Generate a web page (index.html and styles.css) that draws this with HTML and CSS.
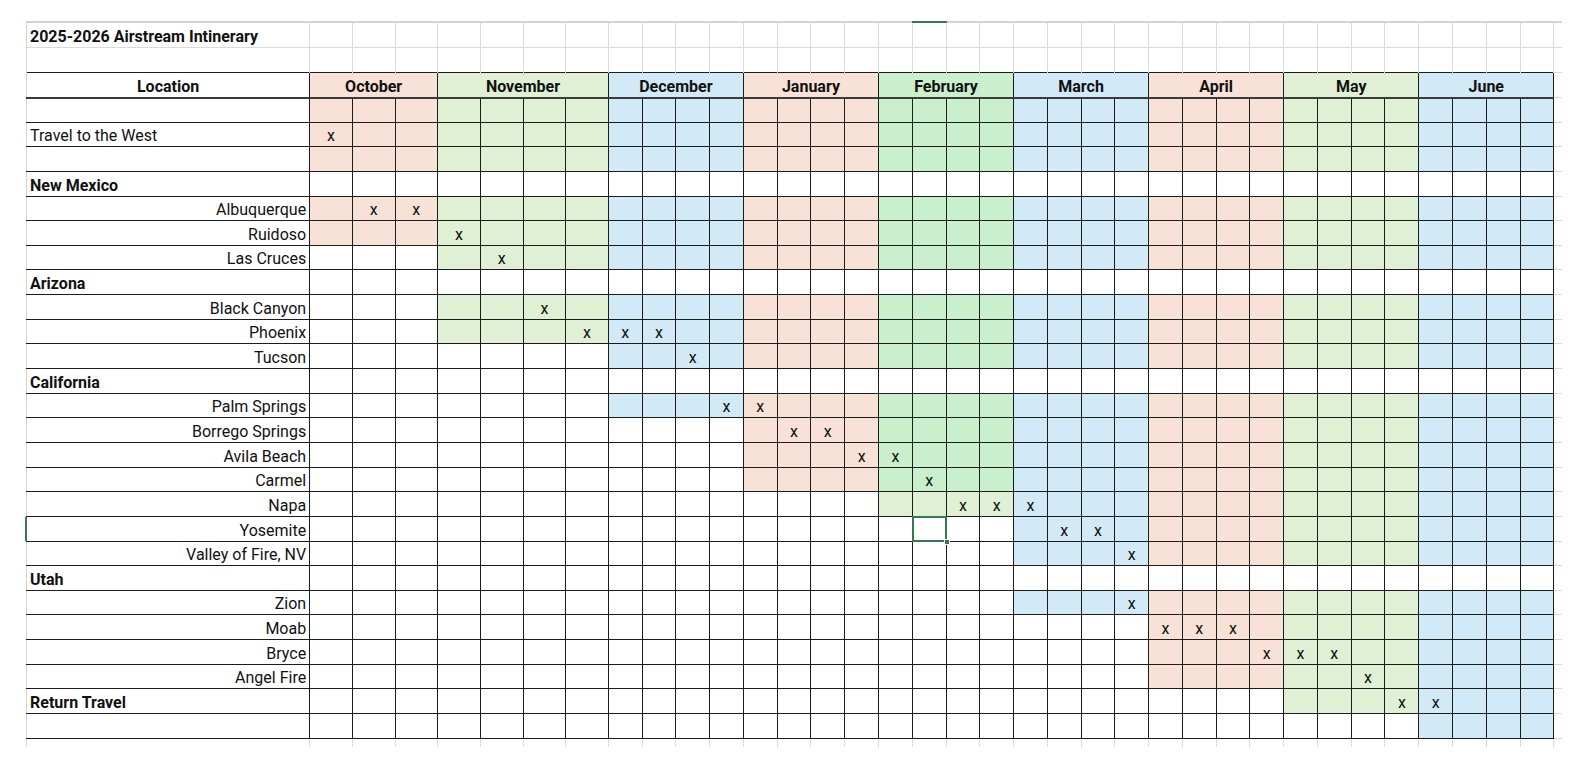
FILE: index.html
```html
<!DOCTYPE html>
<html lang="en">
<head>
<meta charset="utf-8">
<title>2025-2026 Airstream Intinerary</title>
<link rel="stylesheet" href="styles.css">
</head>
<body>
<div class="sheet">
<table class="itinerary">
<colgroup>
<col class="c-loc">
<col class="c-wide"><col class="c-wide"><col class="c-wide">
<col class="c-wide"><col class="c-wide"><col class="c-wide"><col class="c-wide">
<col class="c-narrow"><col class="c-narrow"><col class="c-narrow"><col class="c-narrow">
<col class="c-narrow"><col class="c-narrow"><col class="c-narrow"><col class="c-narrow">
<col class="c-narrow"><col class="c-narrow"><col class="c-narrow"><col class="c-narrow">
<col class="c-narrow"><col class="c-narrow"><col class="c-narrow"><col class="c-narrow">
<col class="c-narrow"><col class="c-narrow"><col class="c-narrow"><col class="c-narrow">
<col class="c-narrow"><col class="c-narrow"><col class="c-narrow"><col class="c-narrow">
<col class="c-narrow"><col class="c-narrow"><col class="c-narrow"><col class="c-narrow">
<col class="c-tail">
</colgroup>
<tr class="grid-row first"><td class="title">2025-2026 Airstream Intinerary</td><td></td><td></td><td></td> <td></td><td></td><td></td><td></td> <td></td><td></td><td></td><td></td> <td></td><td></td><td></td><td></td> <td></td><td class="col-active"></td><td></td><td></td> <td></td><td></td><td></td><td></td> <td></td><td></td><td></td><td></td> <td></td><td></td><td></td><td></td> <td></td><td></td><td></td><td></td><td class="tail"></td></tr>
<tr class="grid-row"><td></td><td></td><td></td><td></td> <td></td><td></td><td></td><td></td> <td></td><td></td><td></td><td></td> <td></td><td></td><td></td><td></td> <td></td><td></td><td></td><td></td> <td></td><td></td><td></td><td></td> <td></td><td></td><td></td><td></td> <td></td><td></td><td></td><td></td> <td></td><td></td><td></td><td></td><td class="tail"></td></tr>
<tr class="head-row"><th>Location</th><th colspan="3" class="m-peach">October</th><th colspan="4" class="m-green">November</th><th colspan="4" class="m-blue">December</th><th colspan="4" class="m-peach">January</th><th colspan="4" class="m-green-strong">February</th><th colspan="4" class="m-blue">March</th><th colspan="4" class="m-peach">April</th><th colspan="4" class="m-green">May</th><th colspan="4" class="m-blue">June</th><td class="tail"></td></tr>

<tr class="body-row from-oct"><td class="plain"></td><td></td><td></td><td></td> <td></td><td></td><td></td><td></td> <td></td><td></td><td></td><td></td> <td></td><td></td><td></td><td></td> <td></td><td></td><td></td><td></td> <td></td><td></td><td></td><td></td> <td></td><td></td><td></td><td></td> <td></td><td></td><td></td><td></td> <td></td><td></td><td></td><td></td><td class="tail"></td></tr>
<tr class="body-row from-oct"><td class="plain">Travel to the West</td><td>x</td><td></td><td></td> <td></td><td></td><td></td><td></td> <td></td><td></td><td></td><td></td> <td></td><td></td><td></td><td></td> <td></td><td></td><td></td><td></td> <td></td><td></td><td></td><td></td> <td></td><td></td><td></td><td></td> <td></td><td></td><td></td><td></td> <td></td><td></td><td></td><td></td><td class="tail"></td></tr>
<tr class="body-row from-oct"><td class="plain"></td><td></td><td></td><td></td> <td></td><td></td><td></td><td></td> <td></td><td></td><td></td><td></td> <td></td><td></td><td></td><td></td> <td></td><td></td><td></td><td></td> <td></td><td></td><td></td><td></td> <td></td><td></td><td></td><td></td> <td></td><td></td><td></td><td></td> <td></td><td></td><td></td><td></td><td class="tail"></td></tr>
<tr class="body-row"><td class="group">New Mexico</td><td></td><td></td><td></td> <td></td><td></td><td></td><td></td> <td></td><td></td><td></td><td></td> <td></td><td></td><td></td><td></td> <td></td><td></td><td></td><td></td> <td></td><td></td><td></td><td></td> <td></td><td></td><td></td><td></td> <td></td><td></td><td></td><td></td> <td></td><td></td><td></td><td></td><td class="tail"></td></tr>
<tr class="body-row from-oct"><td class="label">Albuquerque</td><td></td><td>x</td><td>x</td> <td></td><td></td><td></td><td></td> <td></td><td></td><td></td><td></td> <td></td><td></td><td></td><td></td> <td></td><td></td><td></td><td></td> <td></td><td></td><td></td><td></td> <td></td><td></td><td></td><td></td> <td></td><td></td><td></td><td></td> <td></td><td></td><td></td><td></td><td class="tail"></td></tr>
<tr class="body-row from-oct"><td class="label">Ruidoso</td><td></td><td></td><td></td> <td>x</td><td></td><td></td><td></td> <td></td><td></td><td></td><td></td> <td></td><td></td><td></td><td></td> <td></td><td></td><td></td><td></td> <td></td><td></td><td></td><td></td> <td></td><td></td><td></td><td></td> <td></td><td></td><td></td><td></td> <td></td><td></td><td></td><td></td><td class="tail"></td></tr>
<tr class="body-row from-nov"><td class="label">Las Cruces</td><td></td><td></td><td></td> <td></td><td>x</td><td></td><td></td> <td></td><td></td><td></td><td></td> <td></td><td></td><td></td><td></td> <td></td><td></td><td></td><td></td> <td></td><td></td><td></td><td></td> <td></td><td></td><td></td><td></td> <td></td><td></td><td></td><td></td> <td></td><td></td><td></td><td></td><td class="tail"></td></tr>
<tr class="body-row"><td class="group">Arizona</td><td></td><td></td><td></td> <td></td><td></td><td></td><td></td> <td></td><td></td><td></td><td></td> <td></td><td></td><td></td><td></td> <td></td><td></td><td></td><td></td> <td></td><td></td><td></td><td></td> <td></td><td></td><td></td><td></td> <td></td><td></td><td></td><td></td> <td></td><td></td><td></td><td></td><td class="tail"></td></tr>
<tr class="body-row from-nov"><td class="label">Black Canyon</td><td></td><td></td><td></td> <td></td><td></td><td>x</td><td></td> <td></td><td></td><td></td><td></td> <td></td><td></td><td></td><td></td> <td></td><td></td><td></td><td></td> <td></td><td></td><td></td><td></td> <td></td><td></td><td></td><td></td> <td></td><td></td><td></td><td></td> <td></td><td></td><td></td><td></td><td class="tail"></td></tr>
<tr class="body-row from-nov"><td class="label">Phoenix</td><td></td><td></td><td></td> <td></td><td></td><td></td><td>x</td> <td>x</td><td>x</td><td></td><td></td> <td></td><td></td><td></td><td></td> <td></td><td></td><td></td><td></td> <td></td><td></td><td></td><td></td> <td></td><td></td><td></td><td></td> <td></td><td></td><td></td><td></td> <td></td><td></td><td></td><td></td><td class="tail"></td></tr>
<tr class="body-row from-dec"><td class="label">Tucson</td><td></td><td></td><td></td> <td></td><td></td><td></td><td></td> <td></td><td></td><td>x</td><td></td> <td></td><td></td><td></td><td></td> <td></td><td></td><td></td><td></td> <td></td><td></td><td></td><td></td> <td></td><td></td><td></td><td></td> <td></td><td></td><td></td><td></td> <td></td><td></td><td></td><td></td><td class="tail"></td></tr>
<tr class="body-row"><td class="group">California</td><td></td><td></td><td></td> <td></td><td></td><td></td><td></td> <td></td><td></td><td></td><td></td> <td></td><td></td><td></td><td></td> <td></td><td></td><td></td><td></td> <td></td><td></td><td></td><td></td> <td></td><td></td><td></td><td></td> <td></td><td></td><td></td><td></td> <td></td><td></td><td></td><td></td><td class="tail"></td></tr>
<tr class="body-row from-dec"><td class="label">Palm Springs</td><td></td><td></td><td></td> <td></td><td></td><td></td><td></td> <td></td><td></td><td></td><td>x</td> <td>x</td><td></td><td></td><td></td> <td></td><td></td><td></td><td></td> <td></td><td></td><td></td><td></td> <td></td><td></td><td></td><td></td> <td></td><td></td><td></td><td></td> <td></td><td></td><td></td><td></td><td class="tail"></td></tr>
<tr class="body-row from-jan"><td class="label">Borrego Springs</td><td></td><td></td><td></td> <td></td><td></td><td></td><td></td> <td></td><td></td><td></td><td></td> <td></td><td>x</td><td>x</td><td></td> <td></td><td></td><td></td><td></td> <td></td><td></td><td></td><td></td> <td></td><td></td><td></td><td></td> <td></td><td></td><td></td><td></td> <td></td><td></td><td></td><td></td><td class="tail"></td></tr>
<tr class="body-row from-jan"><td class="label">Avila Beach</td><td></td><td></td><td></td> <td></td><td></td><td></td><td></td> <td></td><td></td><td></td><td></td> <td></td><td></td><td></td><td>x</td> <td>x</td><td></td><td></td><td></td> <td></td><td></td><td></td><td></td> <td></td><td></td><td></td><td></td> <td></td><td></td><td></td><td></td> <td></td><td></td><td></td><td></td><td class="tail"></td></tr>
<tr class="body-row from-jan"><td class="label">Carmel</td><td></td><td></td><td></td> <td></td><td></td><td></td><td></td> <td></td><td></td><td></td><td></td> <td></td><td></td><td></td><td></td> <td></td><td>x</td><td></td><td></td> <td></td><td></td><td></td><td></td> <td></td><td></td><td></td><td></td> <td></td><td></td><td></td><td></td> <td></td><td></td><td></td><td></td><td class="tail"></td></tr>
<tr class="body-row from-feb"><td class="label">Napa</td><td></td><td></td><td></td> <td></td><td></td><td></td><td></td> <td></td><td></td><td></td><td></td> <td></td><td></td><td></td><td></td> <td></td><td></td><td>x</td><td>x</td> <td>x</td><td></td><td></td><td></td> <td></td><td></td><td></td><td></td> <td></td><td></td><td></td><td></td> <td></td><td></td><td></td><td></td><td class="tail"></td></tr>
<tr class="body-row from-mar"><td class="label row-active">Yosemite</td><td></td><td></td><td></td> <td></td><td></td><td></td><td></td> <td></td><td></td><td></td><td></td> <td></td><td></td><td></td><td></td> <td></td><td class="sel"><span class="sel-box"><span class="sel-handle"></span></span></td><td></td><td></td> <td></td><td>x</td><td>x</td><td></td> <td></td><td></td><td></td><td></td> <td></td><td></td><td></td><td></td> <td></td><td></td><td></td><td></td><td class="tail"></td></tr>
<tr class="body-row from-mar"><td class="label">Valley of Fire, NV</td><td></td><td></td><td></td> <td></td><td></td><td></td><td></td> <td></td><td></td><td></td><td></td> <td></td><td></td><td></td><td></td> <td></td><td></td><td></td><td></td> <td></td><td></td><td></td><td>x</td> <td></td><td></td><td></td><td></td> <td></td><td></td><td></td><td></td> <td></td><td></td><td></td><td></td><td class="tail"></td></tr>
<tr class="body-row"><td class="group">Utah</td><td></td><td></td><td></td> <td></td><td></td><td></td><td></td> <td></td><td></td><td></td><td></td> <td></td><td></td><td></td><td></td> <td></td><td></td><td></td><td></td> <td></td><td></td><td></td><td></td> <td></td><td></td><td></td><td></td> <td></td><td></td><td></td><td></td> <td></td><td></td><td></td><td></td><td class="tail"></td></tr>
<tr class="body-row from-mar"><td class="label">Zion</td><td></td><td></td><td></td> <td></td><td></td><td></td><td></td> <td></td><td></td><td></td><td></td> <td></td><td></td><td></td><td></td> <td></td><td></td><td></td><td></td> <td></td><td></td><td></td><td>x</td> <td></td><td></td><td></td><td></td> <td></td><td></td><td></td><td></td> <td></td><td></td><td></td><td></td><td class="tail"></td></tr>
<tr class="body-row from-apr"><td class="label">Moab</td><td></td><td></td><td></td> <td></td><td></td><td></td><td></td> <td></td><td></td><td></td><td></td> <td></td><td></td><td></td><td></td> <td></td><td></td><td></td><td></td> <td></td><td></td><td></td><td></td> <td>x</td><td>x</td><td>x</td><td></td> <td></td><td></td><td></td><td></td> <td></td><td></td><td></td><td></td><td class="tail"></td></tr>
<tr class="body-row from-apr"><td class="label">Bryce</td><td></td><td></td><td></td> <td></td><td></td><td></td><td></td> <td></td><td></td><td></td><td></td> <td></td><td></td><td></td><td></td> <td></td><td></td><td></td><td></td> <td></td><td></td><td></td><td></td> <td></td><td></td><td></td><td>x</td> <td>x</td><td>x</td><td></td><td></td> <td></td><td></td><td></td><td></td><td class="tail"></td></tr>
<tr class="body-row from-apr"><td class="label">Angel Fire</td><td></td><td></td><td></td> <td></td><td></td><td></td><td></td> <td></td><td></td><td></td><td></td> <td></td><td></td><td></td><td></td> <td></td><td></td><td></td><td></td> <td></td><td></td><td></td><td></td> <td></td><td></td><td></td><td></td> <td></td><td></td><td>x</td><td></td> <td></td><td></td><td></td><td></td><td class="tail"></td></tr>
<tr class="body-row from-may"><td class="group">Return Travel</td><td></td><td></td><td></td> <td></td><td></td><td></td><td></td> <td></td><td></td><td></td><td></td> <td></td><td></td><td></td><td></td> <td></td><td></td><td></td><td></td> <td></td><td></td><td></td><td></td> <td></td><td></td><td></td><td></td> <td></td><td></td><td></td><td>x</td> <td>x</td><td></td><td></td><td></td><td class="tail"></td></tr>
<tr class="body-row from-jun"><td class="plain"></td><td></td><td></td><td></td> <td></td><td></td><td></td><td></td> <td></td><td></td><td></td><td></td> <td></td><td></td><td></td><td></td> <td></td><td></td><td></td><td></td> <td></td><td></td><td></td><td></td> <td></td><td></td><td></td><td></td> <td></td><td></td><td></td><td></td> <td></td><td></td><td></td><td></td><td class="tail"></td></tr>
<tr class="stub-row"><td></td><td></td><td></td><td></td> <td></td><td></td><td></td><td></td> <td></td><td></td><td></td><td></td> <td></td><td></td><td></td><td></td> <td></td><td></td><td></td><td></td> <td></td><td></td><td></td><td></td> <td></td><td></td><td></td><td></td> <td></td><td></td><td></td><td></td> <td></td><td></td><td></td><td></td><td class="tail"></td></tr>
</table>
</div>
</body>
</html>
```

FILE: styles.css
```css
:root {
  --peach: #f8e1d6;
  --green: #dff0d4;
  --green-strong: #c9efcc;
  --blue: #d2e9f7;
  --line: #1c1c1c;
  --grid: #dadada;
  --select: #347a4f;
}

* { box-sizing: border-box; }

html, body {
  margin: 0;
  background: #fff;
}

body {
  font-family: Roboto, "Liberation Sans", sans-serif;
  font-size: 16px;
  color: #111;
}

.sheet {
  padding: 21px 0 0 26px;
}

.itinerary {
  border-collapse: collapse;
  table-layout: fixed;
  width: 1536px;
}

.c-loc { width: 283px; }
.c-wide { width: 42.67px; }
.c-narrow { width: 33.75px; }
.c-tail { width: 8px; }

.itinerary td,
.itinerary th {
  padding: 0 3px 1px;
  vertical-align: bottom;
  white-space: nowrap;
  line-height: normal;
  overflow: visible;
}

/* rows */
.grid-row { height: 25px; }
.head-row { height: 25.5px; }
.body-row { height: 24.65px; }
.stub-row { height: 9px; }

/* plain spreadsheet grid above the table */
.grid-row td {
  border: 1px solid var(--grid);
  border-bottom: none;
}
.grid-row.first td { border-top: 2px solid #d3d3d3; }

.title { font-weight: 700; }

/* header */
.head-row th {
  border: 1px solid var(--line);
  border-bottom: 2px solid #3a3a3a;
  font-weight: 700;
  text-align: center;
}

/* body */
.body-row td {
  border: 1px solid var(--line);
  text-align: center;
}
.body-row td.label { text-align: right; }
.body-row td.plain { text-align: left; }
.body-row td.group { text-align: left; font-weight: 700; }

.stub-row td {
  border: none;
  border-left: 1px solid var(--grid);
  border-right: 1px solid var(--grid);
}

/* sheet's leftmost gridline */
.itinerary tr > :first-child { border-left: 1px solid #d4d4d4; }

/* trailing sliver of grid to the right of the table */
.itinerary .tail {
  padding: 0;
  border-left: none;
  border-right: none;
  border-top: 1px solid var(--grid);
  border-bottom: 1px solid var(--grid);
}
.grid-row .tail { border-bottom: none; }
.grid-row.first .tail { border-top: 2px solid #d3d3d3; }
.stub-row .tail { border: none; }

/* month header fills */
.m-peach { background: var(--peach); }
.m-green { background: var(--green); }
.m-green-strong { background: var(--green-strong); }
.m-blue { background: var(--blue); }

/* October: cols 2-4 */
.from-oct > td:nth-child(n+2):nth-child(-n+4) { background: var(--peach); }
/* November: cols 5-8 */
:is(.from-oct, .from-nov) > td:nth-child(n+5):nth-child(-n+8) { background: var(--green); }
/* December: cols 9-12 */
:is(.from-oct, .from-nov, .from-dec) > td:nth-child(n+9):nth-child(-n+12) { background: var(--blue); }
/* January: cols 13-16 */
:is(.from-oct, .from-nov, .from-dec, .from-jan) > td:nth-child(n+13):nth-child(-n+16) { background: var(--peach); }
/* February: cols 17-20 */
:is(.from-oct, .from-nov, .from-dec, .from-jan) > td:nth-child(n+17):nth-child(-n+20) { background: var(--green-strong); }
.from-feb > td:nth-child(n+17):nth-child(-n+20) { background: var(--green); }
/* March: cols 21-24 */
:is(.from-oct, .from-nov, .from-dec, .from-jan, .from-feb, .from-mar) > td:nth-child(n+21):nth-child(-n+24) { background: var(--blue); }
/* April: cols 25-28 */
:is(.from-oct, .from-nov, .from-dec, .from-jan, .from-feb, .from-mar, .from-apr) > td:nth-child(n+25):nth-child(-n+28) { background: var(--peach); }
/* May: cols 29-32 */
:is(.from-oct, .from-nov, .from-dec, .from-jan, .from-feb, .from-mar, .from-apr, .from-may) > td:nth-child(n+29):nth-child(-n+32) { background: var(--green); }
/* June: cols 33-36 */
:is(.from-oct, .from-nov, .from-dec, .from-jan, .from-feb, .from-mar, .from-apr, .from-may, .from-jun) > td:nth-child(n+33):nth-child(-n+36) { background: var(--blue); }

/* active cell selection */
.col-active,
.row-active,
.sel { position: relative; }

.col-active::before {
  content: "";
  position: absolute;
  left: -1px;
  right: -1px;
  top: -2px;
  height: 2px;
  background: var(--select);
}

.row-active::before {
  content: "";
  position: absolute;
  left: -2px;
  top: 0;
  bottom: 0;
  width: 2px;
  background: var(--select);
}

.sel-box {
  position: absolute;
  left: -1px;
  top: -1px;
  right: -1px;
  bottom: -1px;
  border: 2px solid var(--select);
}

.sel-handle {
  position: absolute;
  right: -5px;
  bottom: -5px;
  width: 6px;
  height: 6px;
  background: var(--select);
  border: 1px solid #fff;
}
```
